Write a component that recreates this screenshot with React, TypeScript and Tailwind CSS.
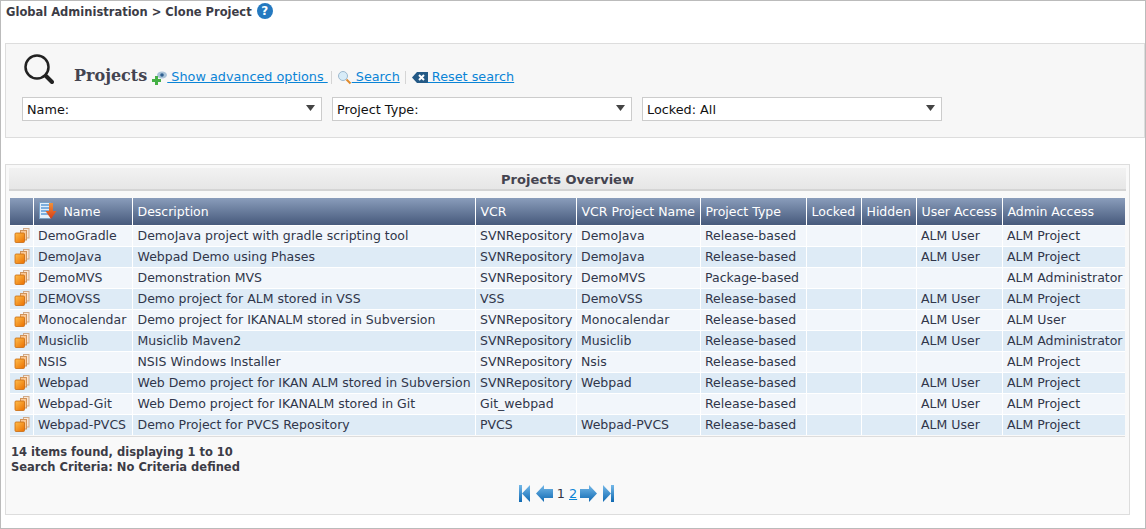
const rows = [
  ["DemoGradle", "DemoJava project with gradle scripting tool", "SVNRepository", "DemoJava", "Release-based", "", "", "ALM User", "ALM Project"],
  ["DemoJava", "Webpad Demo using Phases", "SVNRepository", "DemoJava", "Release-based", "", "", "ALM User", "ALM Project"],
  ["DemoMVS", "Demonstration MVS", "SVNRepository", "DemoMVS", "Package-based", "", "", "", "ALM Administrator"],
  ["DEMOVSS", "Demo project for ALM stored in VSS", "VSS", "DemoVSS", "Release-based", "", "", "ALM User", "ALM Project"],
  ["Monocalendar", "Demo project for IKANALM stored in Subversion", "SVNRepository", "Monocalendar", "Release-based", "", "", "ALM User", "ALM User"],
  ["Musiclib", "Musiclib Maven2", "SVNRepository", "Musiclib", "Release-based", "", "", "ALM User", "ALM Administrator"],
  ["NSIS", "NSIS Windows Installer", "SVNRepository", "Nsis", "Release-based", "", "", "", "ALM Project"],
  ["Webpad", "Web Demo project for IKAN ALM stored in Subversion", "SVNRepository", "Webpad", "Release-based", "", "", "ALM User", "ALM Project"],
  ["Webpad-Git", "Web Demo project for IKANALM stored in Git", "Git_webpad", "", "Release-based", "", "", "ALM User", "ALM Project"],
  ["Webpad-PVCS", "Demo Project for PVCS Repository", "PVCS", "Webpad-PVCS", "Release-based", "", "", "ALM User", "ALM Project"],
];

const columns = [
  { label: "Description", width: "w-[343px]" },
  { label: "VCR", width: "w-[101px]" },
  { label: "VCR Project Name", width: "w-[124px]" },
  { label: "Project Type", width: "w-[106px]" },
  { label: "Locked", width: "w-[55px]" },
  { label: "Hidden", width: "w-[55px]" },
  { label: "User Access", width: "w-[86px]" },
  { label: "Admin Access", width: "w-[123px]" },
];

function ProjectIcon() {
  return (
    <svg width="16" height="16" viewBox="0 0 16 16" className="block">
      <defs>
        <linearGradient id="projectFront" x1="0" y1="0" x2="1" y2="1">
          <stop offset="0" stopColor="#ffbe4d" />
          <stop offset="1" stopColor="#ea6f00" />
        </linearGradient>
      </defs>
      <rect x="9.500" y="0.500" width="5.500" height="9.500" fill="#fbe8d6" stroke="#cfa988" />
      <rect x="6.500" y="2.500" width="6" height="9.500" fill="#f9c999" stroke="#d0935a" />
      <rect x="1" y="5" width="9.500" height="9.500" rx="1" fill="url(#projectFront)" stroke="#c8690f" strokeWidth="0.800" />
    </svg>
  );
}

function Select({ label }: { label: string }) {
  return (
    <div className="flex h-6 w-[300px] items-center justify-between border border-[#cccccc] bg-white pl-[4px] pr-[6px] text-[12.8px] text-[#111111]">
      <span className="mt-[1px]">{label}</span>
      <svg width="9" height="6" viewBox="0 0 9 6" className="mb-[2px]">
        <path d="M0 0h9L4.500 6z" fill="#444444" />
      </svg>
    </div>
  );
}

function PagerGradient() {
  return (
    <defs>
      <linearGradient id="pagerBlue" x1="0" y1="0" x2="0" y2="1">
        <stop offset="0" stopColor="#74b8e8" />
        <stop offset="1" stopColor="#0f69b2" />
      </linearGradient>
    </defs>
  );
}

function PagerEnd({ flip }: { flip?: boolean }) {
  return (
    <svg width="11" height="17" viewBox="0 0 11 17" className={flip ? "block -scale-x-100" : "block"}>
      <PagerGradient />
      <rect x="0" y="0" width="3" height="17" fill="url(#pagerBlue)" />
      <path d="M3 8.500 11 0v17z" fill="url(#pagerBlue)" />
    </svg>
  );
}

function PagerArrow({ flip }: { flip?: boolean }) {
  return (
    <svg width="17" height="17" viewBox="0 0 17 17" className={flip ? "block -scale-x-100" : "block"}>
      <PagerGradient />
      <path d="M0 8.500 8 0v4h9v9H8v4z" fill="url(#pagerBlue)" />
    </svg>
  );
}

export default function App() {
  return (
    <div className="h-[529px] w-[1146px] overflow-hidden border border-[#bbbbbb] bg-white font-['DejaVu_Sans',sans-serif] text-[12.5px] text-[#333344]">
      <div className="flex h-[42px] items-start pl-[5px] pt-[2px]">
        <span className="text-[11.5px] font-bold leading-[18px] text-[#3c3c46]">Global Administration &gt; Clone Project</span>
        <span className="ml-[5px] flex size-4 items-center justify-center rounded-full bg-[#2479c0] text-[12px] font-bold leading-none text-white">?</span>
      </div>

      <div className="ml-[4px] h-[95px] border border-[#dddddd] bg-[#f7f7f7] pl-4 pt-[9px]">
        <div className="flex h-[44px] items-start">
          <svg width="32" height="32" viewBox="0 0 32 32">
            <circle cx="15" cy="14" r="11.500" fill="none" stroke="#222222" strokeWidth="2.500" />
            <path d="M24 23l6 6" stroke="#222222" strokeWidth="4" strokeLinecap="round" />
          </svg>
          <span className="ml-[20px] mt-[13px] font-['DejaVu_Serif',serif] text-[16px] font-bold leading-5 text-[#444450]">Projects</span>
          <div className="ml-[5px] mt-[16px] flex items-center text-[12.8px] leading-4 text-[#0a84d6]">
            <svg width="15" height="15" viewBox="0 0 15 15">
              <ellipse cx="10" cy="5" rx="5" ry="3.500" fill="#a9c3d8" />
              <circle cx="10" cy="5" r="1.800" fill="#2f5f8f" />
              <path d="M3 6h3v3h3v3H6v3H3v-3H0V9h3z" fill="#45b045" />
            </svg>
            <span className="underline">&nbsp;Show advanced options&nbsp;</span>
            <span className="mx-[3px] h-[13px] w-px bg-[#d5d5d5]" />
            <svg width="15" height="15" viewBox="0 0 15 15" className="ml-[2px]">
              <circle cx="6" cy="6" r="4.500" fill="#d8ecf8" stroke="#9db9cf" />
              <path d="M9.500 9.500l4 4" stroke="#e08a2c" strokeWidth="2" />
            </svg>
            <span className="underline">&nbsp;Search</span>
            <span className="mx-[5px] h-[13px] w-px bg-[#d5d5d5]" />
            <svg width="16" height="11" viewBox="0 0 16 11" className="ml-[1px]">
              <path d="M5 0h11v11H5L0 5.500z" fill="#245a86" />
              <path d="M7 3l5 5M12 3l-5 5" stroke="#ffffff" strokeWidth="2" />
            </svg>
            <span className="underline">&nbsp;Reset search</span>
          </div>
        </div>
        <div className="flex gap-[10px]">
          <Select label="Name:" />
          <Select label="Project Type:" />
          <Select label="Locked: All" />
        </div>
      </div>

      <div className="ml-[4px] mt-[26px] h-[351px] w-[1125px] border border-[#dddddd] bg-[#f9f9f9] px-[4px] pt-[3px]">
        <div className="-mx-px flex h-[23px] items-center justify-center border-b-2 border-[#d4d4d4] bg-gradient-to-b from-[#f2f2f2] to-[#e6e6e6] text-[13px] font-bold text-[#444450]">
          <span className="mt-[2px]">Projects Overview</span>
        </div>
        <table className="mt-[7px] w-[1115px] table-fixed border-collapse">
          <thead>
            <tr className="h-[27px] bg-gradient-to-b from-[#8a9dbb] to-[#475a7c] text-left font-normal text-white">
              <th className="w-[23px] border-r border-white p-0" />
              <th className="w-[99px] border-r border-white p-0 font-normal">
                <div className="flex items-center pl-[5px]">
                  <svg width="18" height="18" viewBox="0 0 18 18">
                    <defs>
                      <linearGradient id="sortArrow" x1="0" y1="0" x2="0" y2="1">
                        <stop offset="0" stopColor="#f0913a" />
                        <stop offset="1" stopColor="#d63a14" />
                      </linearGradient>
                    </defs>
                    <rect x="0.500" y="0.500" width="11" height="16" fill="#e4effa" stroke="#7ba0c4" />
                    <path d="M2 3h8M2 6h8M2 9h8M2 12h8" stroke="#5c9ad6" strokeWidth="1.500" />
                    <path d="M10 1h4v8h3.500l-5.500 8-5.500-8H10z" fill="url(#sortArrow)" />
                  </svg>
                  <span className="ml-[7px] pt-[2px]">Name</span>
                </div>
              </th>
              {columns.map((col) => (
                <th key={col.label} className={`${col.width} overflow-hidden whitespace-nowrap border-r border-white p-0 pl-[5px] pt-[2px] font-normal last:border-r-0`}>
                  {col.label}
                </th>
              ))}
            </tr>
          </thead>
          <tbody>
            {rows.map((row, i) => (
              <tr key={row[0]} className={`h-[21px] ${i % 2 === 0 ? "bg-[#f2f6fb]" : "bg-[#deebf6]"}`}>
                <td className="border-r border-t border-white p-0 pl-[4px]">
                  <ProjectIcon />
                </td>
                {row.map((cell, j) => (
                  <td key={j} className={`overflow-hidden whitespace-nowrap border-r border-t border-white p-0 leading-[20px] text-[#30364a] last:border-r-0 ${j === 1 ? "pl-[5px]" : "pl-[4.500px]"}`}>
                    {cell}
                  </td>
                ))}
              </tr>
            ))}
          </tbody>
        </table>
        <div className="mt-[1px] border-t border-[#dddddd] pl-[1px] pt-[8px] text-[11.5px] font-bold leading-[15px] text-[#3c3c46]">
          <div>14 items found, displaying 1 to 10</div>
          <div>Search Criteria: No Criteria defined</div>
        </div>
        <div className="mt-[9px] flex items-center justify-center pr-[2px]">
          <PagerEnd />
          <span className="ml-[6px]"><PagerArrow /></span>
          <span className="ml-[4px] text-[12.8px]">1</span>
          <span className="ml-[4px] text-[12.8px] text-[#0a84d6] underline">2</span>
          <span className="ml-[3px]"><PagerArrow flip /></span>
          <span className="ml-[6px]"><PagerEnd flip /></span>
        </div>
      </div>
    </div>
  );
}
